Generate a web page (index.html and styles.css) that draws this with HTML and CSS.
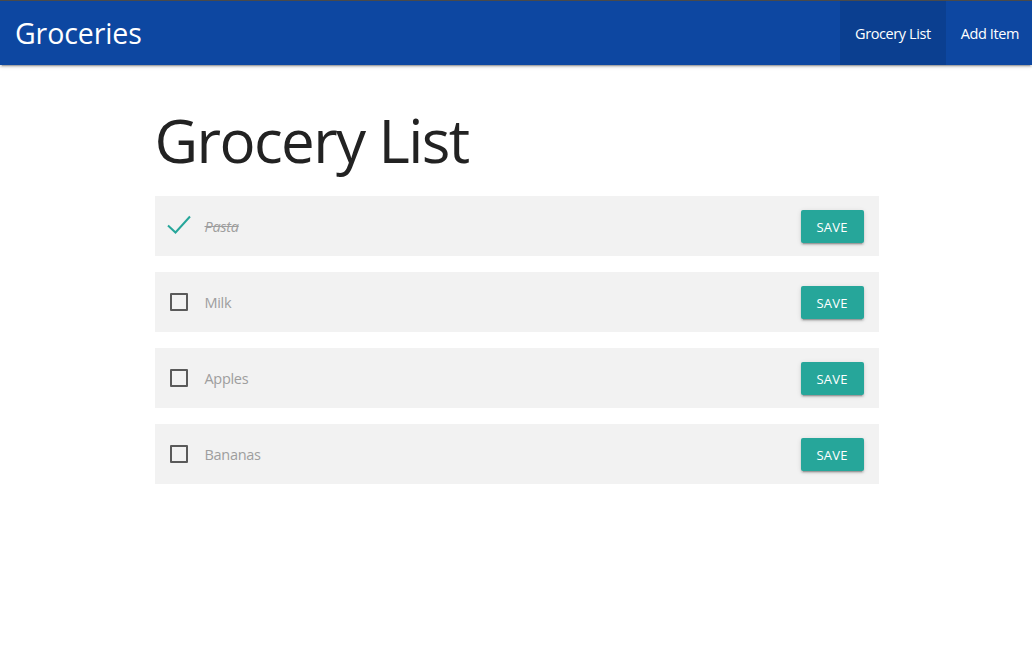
FILE: index.html
```html
<!DOCTYPE html>
<html lang="en">
<head>
<meta charset="utf-8">
<title>Groceries</title>
<link rel="stylesheet" href="styles.css">
</head>
<body>
<nav class="navbar">
  <a class="brand" href="#">Groceries</a>
  <ul class="nav-links">
    <li><a class="nav-link active" href="#">Grocery List</a></li>
    <li><a class="nav-link" href="#">Add Item</a></li>
  </ul>
</nav>
<main class="container">
  <h1 class="title">Grocery List</h1>
  <ul class="items">
    <li class="item">
      <label class="check">
        <span class="box checked">
          <svg width="26" height="22" viewBox="0 0 26 22"><polyline points="1,10.5 8.5,17.5 23,1.5" fill="none" stroke="#26a69a" stroke-width="2"/></svg>
        </span>
        <span class="name done">Pasta</span>
      </label>
      <button class="btn">Save</button>
    </li>
    <li class="item">
      <label class="check"><span class="box"></span><span class="name">Milk</span></label>
      <button class="btn">Save</button>
    </li>
    <li class="item">
      <label class="check"><span class="box"></span><span class="name">Apples</span></label>
      <button class="btn">Save</button>
    </li>
    <li class="item">
      <label class="check"><span class="box"></span><span class="name">Bananas</span></label>
      <button class="btn">Save</button>
    </li>
  </ul>
</main>
</body>
</html>
```
FILE: styles.css
```css
* { box-sizing: border-box; }
html, body { margin: 0; padding: 0; }
body {
  font-family: "Open Sans", "Noto Sans", sans-serif;
  color: rgba(0,0,0,0.87);
  background: #fff;
}
.navbar {
  height: 65px;
  background: #0d47a1;
  border-top: 1px solid #4a4a4a;
  display: flex;
  align-items: stretch;
  justify-content: space-between;
  box-shadow: 0 2px 2px 0 rgba(0,0,0,0.14), 0 1px 5px 0 rgba(0,0,0,0.12), 0 3px 1px -2px rgba(0,0,0,0.2);
}
.brand {
  color: #fff;
  text-decoration: none;
  font-size: 28.5px;
  padding-left: 15px;
  display: flex;
  align-items: center;
  letter-spacing: -0.1px;
}
.nav-links {
  list-style: none;
  margin: 0;
  padding: 0;
  display: flex;
}
.nav-links li { display: flex; }
.nav-link {
  color: #fff;
  text-decoration: none;
  font-size: 14.5px;
  padding: 0 15px;
  display: flex;
  align-items: center;
  letter-spacing: -0.4px;
}
.nav-links li:last-child .nav-link { padding-right: 13px; }
.nav-link.active { background: rgba(0,0,0,0.1); }
.container {
  width: 725px;
  margin: 0 auto;
  padding-left: 1px;
}
.title {
  font-weight: 400;
  font-size: 60px;
  line-height: 1;
  margin: 45px 0 0;
  height: 86px;
  letter-spacing: -1.6px;
  color: #222;
}
.items {
  list-style: none;
  margin: 0;
  padding: 0;
  display: flex;
  flex-direction: column;
  gap: 16px;
}
.item {
  height: 60px;
  background: #f2f2f2;
  display: flex;
  align-items: center;
  justify-content: space-between;
  padding: 0 15px;
}
.check {
  display: flex;
  align-items: center;
}
.box {
  width: 18px;
  height: 18px;
  border: 2px solid #5a5a5a;
  border-radius: 1px;
  position: relative;
}
.box.checked { border: none; }
.box.checked svg {
  position: absolute;
  left: -3px;
  top: -2px;
}
.name {
  margin-left: 17px;
  font-size: 14.5px;
  color: #9e9e9e;
  letter-spacing: -0.3px;
}
.name.done {
  font-style: italic;
  text-decoration: line-through;
}
.btn {
  width: 63px;
  height: 33px;
  border: none;
  border-radius: 2px;
  background: #26a69a;
  color: #fff;
  font-family: "Open Sans", "Noto Sans", sans-serif;
  font-size: 13px;
  font-weight: 500;
  text-transform: uppercase;
  letter-spacing: 0.2px;
  box-shadow: 0 2px 2px 0 rgba(0,0,0,0.14), 0 1px 5px 0 rgba(0,0,0,0.12), 0 3px 1px -2px rgba(0,0,0,0.2);
  padding: 0;
  margin-top: 1px;
}
```
